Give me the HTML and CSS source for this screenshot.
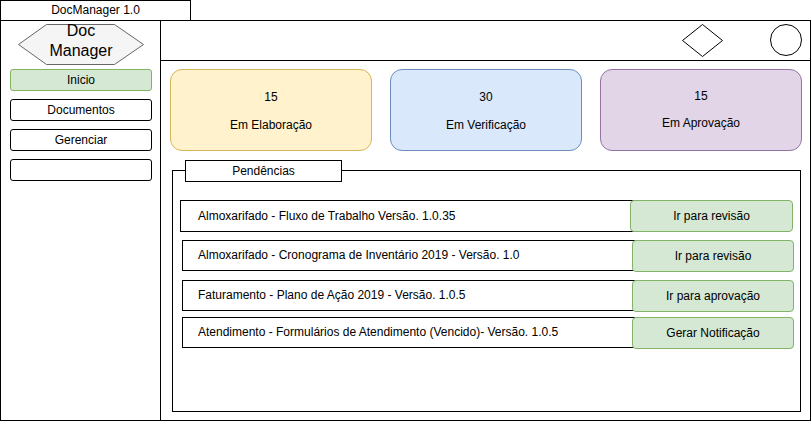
FILE: index.html
```html
<!DOCTYPE html>
<html lang="pt">
<head>
    <meta charset="UTF-8">
    <title>DocManager 1.0</title>
    <link rel="stylesheet" href="styles.css">
</head>
<body>
    <div class="title-bar">DocManager 1.0</div>

    <div class="frame">
        <nav class="sidebar">
            <div class="hex">
                <svg class="hex-shape" width="126" height="41" viewBox="0 0 126 41">
                    <polygon points="0.5,20.5 28.5,0.5 96.5,0.5 125.5,20.5 96.5,40.5 28.5,40.5" fill="#f5f5f5" stroke="#666666"/>
                </svg>
                <span class="hex-text">Doc<br>Manager</span>
            </div>
            <a class="nav-btn active">Inicio</a>
            <a class="nav-btn">Documentos</a>
            <a class="nav-btn">Gerenciar</a>
            <a class="nav-btn"></a>
        </nav>

        <main class="main">
            <header class="topbar">
                <svg width="42" height="34" viewBox="0 0 42 34">
                    <polygon points="20.5,0.5 40.5,16.5 20.5,32.5 0.5,16.5" fill="#fff" stroke="#000"/>
                </svg>
                <svg class="avatar" width="32" height="32" viewBox="0 0 32 32">
                    <circle cx="16" cy="16" r="15.5" fill="#fff" stroke="#000"/>
                </svg>
            </header>

            <section class="content">
                <div class="cards">
                    <div class="card card-yellow">
                        <div class="card-num">15</div>
                        <div class="card-label">Em Elaboração</div>
                    </div>
                    <div class="card card-blue">
                        <div class="card-num">30</div>
                        <div class="card-label">Em Verificação</div>
                    </div>
                    <div class="card card-purple">
                        <div class="card-num">15</div>
                        <div class="card-label">Em Aprovação</div>
                    </div>
                </div>

                <div class="group">
                    <div class="group-label">Pendências</div>

                    <div class="row row-first">
                        <div class="row-text">Almoxarifado - Fluxo de Trabalho Versão. 1.0.35</div>
                        <a class="row-btn">Ir para revisão</a>
                    </div>
                    <div class="row">
                        <div class="row-text">Almoxarifado - Cronograma de Inventário 2019 - Versão. 1.0</div>
                        <a class="row-btn">Ir para revisão</a>
                    </div>
                    <div class="row">
                        <div class="row-text">Faturamento - Plano de Ação 2019 - Versão. 1.0.5</div>
                        <a class="row-btn">Ir para aprovação</a>
                    </div>
                    <div class="row row-last">
                        <div class="row-text">Atendimento - Formulários de Atendimento (Vencido)- Versão. 1.0.5</div>
                        <a class="row-btn">Gerar Notificação</a>
                    </div>
                </div>
            </section>
        </main>
    </div>
</body>
</html>
```

FILE: styles.css
```css
* {
    margin: 0;
    padding: 0;
    box-sizing: border-box;
}

body {
    font-family: 'Liberation Sans', Arial, sans-serif;
    font-size: 12px;
    color: #000;
    background: #fff;
    width: 811px;
    height: 421px;
    overflow: hidden;
}

.title-bar {
    width: 191px;
    height: 21px;
    border: 1px solid #000;
    text-align: center;
    line-height: 19px;
}

.frame {
    display: flex;
    width: 811px;
    height: 401px;
    margin-top: -1px;
    border: 1px solid #000;
}

/* Sidebar */
.sidebar {
    width: 160px;
    border-right: 1px solid #000;
    display: flex;
    flex-direction: column;
    align-items: flex-start;
    padding: 3px 0 0 9px;
}

.hex {
    position: relative;
    width: 126px;
    height: 41px;
    margin-left: 8px;
    display: flex;
    justify-content: center;
}

.hex-shape {
    position: absolute;
    top: 0;
    left: 0;
}

.hex-text {
    position: relative;
    font-size: 16px;
    line-height: 20px;
    text-align: center;
    margin-top: -3px;
}

.nav-btn {
    display: block;
    width: 142px;
    height: 22px;
    margin-top: 8px;
    border: 1px solid #000;
    border-radius: 3px;
    text-align: center;
    line-height: 20px;
    background: #fff;
}

.hex + .nav-btn {
    margin-top: 4px;
}

.nav-btn.active {
    background: #d5e8d4;
    border-color: #82b366;
}

/* Main */
.main {
    flex: 1;
    display: flex;
    flex-direction: column;
}

.topbar {
    height: 40px;
    border-bottom: 1px solid #000;
    display: flex;
    justify-content: flex-end;
    align-items: center;
    padding-right: 8px;
    gap: 46px;
}

.topbar svg {
    display: block;
    margin-top: 1px;
}

.topbar .avatar {
    margin-top: -2px;
}

.content {
    padding: 8px 0 0 9px;
}

.cards {
    display: flex;
    gap: 18px;
}

.card {
    width: 202px;
    height: 82px;
    border: 1px solid;
    border-radius: 12px;
    text-align: center;
    padding-top: 20px;
}

.card-num,
.card-label {
    line-height: 14px;
}

.card-label {
    margin-top: 14px;
}

.card-yellow {
    background: #fff2cc;
    border-color: #d6b656;
}

.card-blue {
    width: 192px;
    background: #dae8fc;
    border-color: #6c8ebf;
}

.card-purple {
    background: #e1d5e7;
    border-color: #9673a6;
    padding-top: 19px;
}

.card-purple .card-label {
    margin-top: 13px;
}

/* Pendências */
.group {
    width: 629px;
    height: 242px;
    margin: 19px 0 0 2px;
    border: 1px solid #000;
    padding-left: 7px;
}

.group-label {
    width: 157px;
    height: 22px;
    margin: -11px 0 0 5px;
    border: 1px solid #000;
    background: #fff;
    text-align: center;
    line-height: 20px;
}

.row {
    display: flex;
    align-items: flex-start;
    margin: 8px 0 0 2px;
}

.row-first {
    margin: 18px 0 0 0;
}

.row-last {
    margin-top: 5px;
}

.row-text {
    width: 453px;
    height: 31px;
    border: 1px solid #000;
    line-height: 29px;
    padding-left: 15px;
    white-space: nowrap;
}

.row-first .row-text {
    width: 454px;
    height: 32px;
    line-height: 30px;
    padding-left: 17px;
}

.row-btn {
    position: relative;
    width: 162px;
    height: 32px;
    margin-left: -3px;
    border: 1px solid #82b366;
    border-radius: 4px;
    background: #d5e8d4;
    text-align: center;
    line-height: 30px;
}

.row-first .row-btn {
    width: 163px;
    margin-left: -4px;
}
```
